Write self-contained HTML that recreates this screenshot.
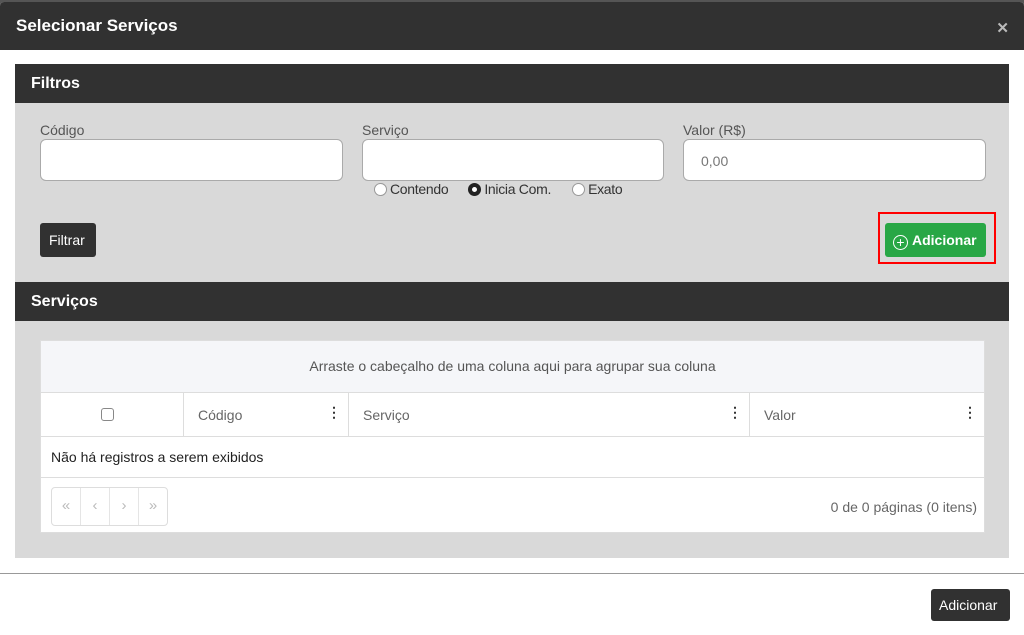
<!DOCTYPE html>
<html><head><meta charset="utf-8"><style>
*{box-sizing:border-box;margin:0;padding:0}
body{width:1024px;height:635px;background:#555;font-family:"Liberation Sans",Arial,sans-serif;position:relative;overflow:hidden}
.modal{position:absolute;left:0;top:2px;width:1024px;height:633px;background:#fff;border-radius:4px 4px 0 0;overflow:hidden}
.mh{height:48px;background:#313131;color:#fff;font-weight:bold;font-size:17px;padding:14px 16px;position:relative}
.x{position:absolute;right:15px;top:17px;font-size:15px;color:#bbb;font-weight:bold}
.abs{position:absolute}
.bar{background:#313131;color:#fff;font-weight:bold;font-size:16px;padding:11px 16px}
.lbl{font-size:14px;color:#555}
.inp{background:#fff;border:1px solid #aaa;border-radius:6px;height:42px}
.rad{display:inline-block;width:13px;height:13px;border:1px solid #999;border-radius:50%;background:#fff;vertical-align:-2px;margin-right:3px}
.btn{background:#313131;color:#fff;border-radius:3px;font-size:14px}
</style></head><body>
<div class="modal">
<div class="mh">Selecionar Serviços<span class="x">✕</span></div>
<div class="abs bar" style="left:15px;top:62px;width:994px;height:39px">Filtros</div>
<div class="abs" style="left:15px;top:101px;width:994px;height:179px;background:#d9d9d9"></div>
<div class="abs lbl" style="left:40px;top:120px">Código</div>
<div class="abs lbl" style="left:362px;top:120px">Serviço</div>
<div class="abs lbl" style="left:683px;top:120px">Valor (R$)</div>
<div class="abs inp" style="left:40px;top:137px;width:303px"></div>
<div class="abs inp" style="left:362px;top:137px;width:302px"></div>
<div class="abs inp" style="left:683px;top:137px;width:303px;font-size:14px;color:#777;padding:13px 17px">0,00</div>
<div class="abs" style="left:374px;top:179px;font-size:14px;color:#333;white-space:nowrap;letter-spacing:-0.3px">
<span class="rad"></span>Contendo<span style="display:inline-block;width:20px"></span><span class="rad" style="border:4px solid #222"></span>Inicia Com.<span style="display:inline-block;width:21px"></span><span class="rad"></span>Exato</div>
<div class="abs btn" style="left:40px;top:221px;width:56px;height:34px;padding:9px 9px">Filtrar</div>
<div class="abs" style="left:878px;top:210px;width:118px;height:52px;border:2px solid #f00"></div>
<div class="abs" style="left:885px;top:221px;width:101px;height:34px;background:#28a745;border-radius:3px;color:#fff;font-size:14px;font-weight:bold;padding:9px 8px;white-space:nowrap"><span style="display:inline-block;width:15px;height:15px;border:1px solid #fff;border-radius:50%;text-align:center;line-height:12px;font-size:14px;font-weight:normal;vertical-align:-2px;margin-right:4px">+</span>Adicionar</div>
<div class="abs bar" style="left:15px;top:280px;width:994px;height:39px">Serviços</div>
<div class="abs" style="left:15px;top:319px;width:994px;height:237px;background:#d9d9d9"></div>
<div class="abs" style="left:40px;top:338px;width:945px;height:193px;background:#fff;border:1px solid #ddd">
<div style="height:52px;background:#f5f6f9;border-bottom:1px solid #ddd;text-align:center;font-size:14px;color:#555;padding-top:17px">Arraste o cabeçalho de uma coluna aqui para agrupar sua coluna</div>
<div style="height:44px;border-bottom:1px solid #ddd;position:relative;font-size:14px;color:#666">
<span class="abs" style="left:60px;top:15px;width:13px;height:13px;border:1px solid #888;border-radius:3px"></span>
<span class="abs" style="left:142px;top:0;height:44px;border-left:1px solid #ddd"></span>
<span class="abs" style="left:157px;top:14px">Código</span><span class="abs" style="left:286px;top:11px;color:#333;font-weight:bold">⋮</span>
<span class="abs" style="left:307px;top:0;height:44px;border-left:1px solid #ddd"></span>
<span class="abs" style="left:322px;top:14px">Serviço</span><span class="abs" style="left:687px;top:11px;color:#333;font-weight:bold">⋮</span>
<span class="abs" style="left:708px;top:0;height:44px;border-left:1px solid #ddd"></span>
<span class="abs" style="left:723px;top:14px">Valor</span><span class="abs" style="left:922px;top:11px;color:#333;font-weight:bold">⋮</span>
</div>
<div style="height:41px;border-bottom:1px solid #ddd;font-size:14px;color:#222;padding:12px 10px">Não há registros a serem exibidos</div>
<div class="abs" style="left:10px;top:146px;width:117px;height:39px;border:1px solid #ddd;border-radius:4px;display:flex;color:#bbb;font-size:15px">
<span style="flex:1;text-align:center;padding-top:9px;border-right:1px solid #e5e5e5">«</span><span style="flex:1;text-align:center;padding-top:9px;border-right:1px solid #e5e5e5">‹</span><span style="flex:1;text-align:center;padding-top:9px;border-right:1px solid #e5e5e5">›</span><span style="flex:1;text-align:center;padding-top:9px">»</span></div>
<div class="abs" style="right:7px;top:158px;font-size:14px;color:#666">0 de 0 páginas (0 itens)</div>
</div>
<div class="abs" style="left:0;top:571px;width:1024px;border-top:1px solid #999"></div>
<div class="abs btn" style="left:931px;top:587px;width:79px;height:32px;padding:8px 8px">Adicionar</div>
</div>
</body></html>
